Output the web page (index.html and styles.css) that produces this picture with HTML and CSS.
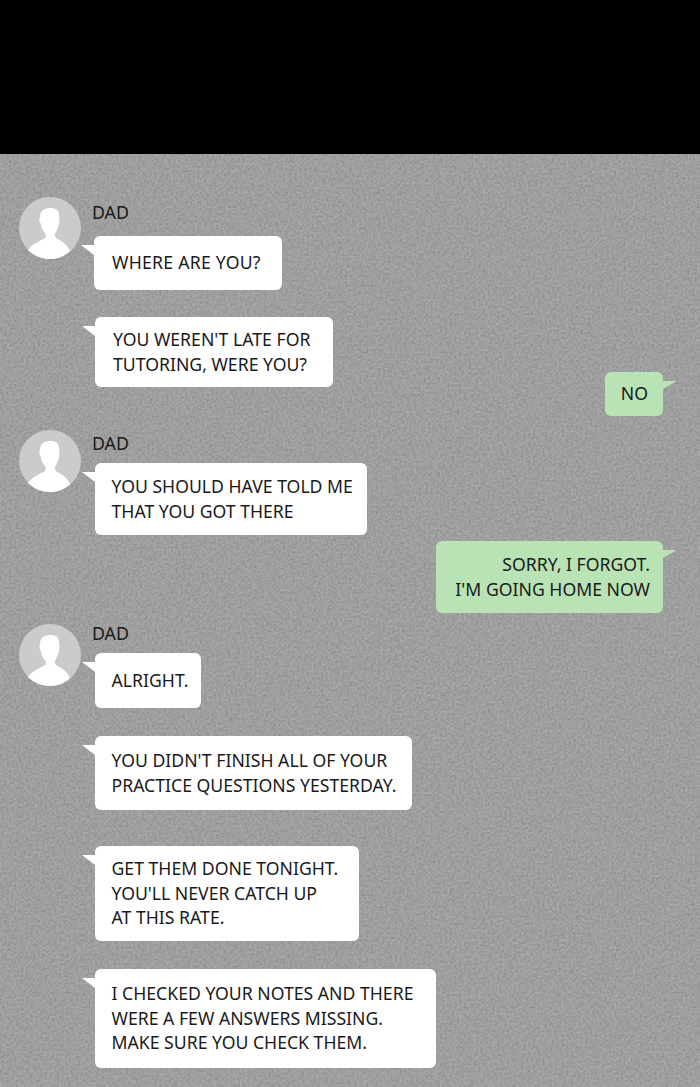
FILE: index.html
```html
<!DOCTYPE html>
<html lang="en">
<head>
    <meta charset="UTF-8">
    <meta name="viewport" content="width=device-width, initial-scale=1.0">
    <title>Chat with Dad</title>
    <link rel="stylesheet" href="styles.css">
</head>
<body>
    <div class="top-panel"></div>

    <main class="chat">
        <!-- paper grain behind the messages -->
        <svg class="grain" width="700" height="933" aria-hidden="true">
            <filter id="grainFilter" x="0" y="0" width="100%" height="100%">
                <feTurbulence type="fractalNoise" baseFrequency="0.42" numOctaves="2" seed="4"/>
                <feColorMatrix type="matrix" values="0 0 0 0 0  0 0 0 0 0  0 0 0 0 0  1.8 0 0 0 -0.6"/>
            </filter>
            <rect width="700" height="933" filter="url(#grainFilter)"/>
        </svg>

        <section class="group first-group">
            <svg class="avatar" viewBox="0 0 62 62" aria-hidden="true">
                <circle cx="31" cy="31" r="31" fill="#cbcbcb"/>
                <path class="person" d="M9 53 C13 47 21 44 26 41 C27 39 27 37 26 36 C23 33 22 30 22 27 C20 25 20 22 21 20 C21 14 24 12 30 11 C36 11 40 12 40 18 C41 24 40 30 37 35 C35 37 36 39 37 41 C42 44 48 47 51 54 C46 59 39 62 31 62 C22 62 14 58 9 53 Z"/>
            </svg>
            <div class="messages">
                <div class="name name-a">DAD</div>
                <div class="bubble m1">WHERE ARE YOU?</div>
                <div class="bubble m2">YOU WEREN'T LATE FOR<br>TUTORING, WERE YOU?</div>
            </div>
        </section>

        <div class="bubble mine m3">NO</div>

        <section class="group second-group">
            <svg class="avatar" viewBox="0 0 62 62" aria-hidden="true">
                <circle cx="31" cy="31" r="31" fill="#cbcbcb"/>
                <path class="person" d="M9 53 C13 47 21 44 26 41 C27 39 27 37 26 36 C23 33 22 30 22 27 C20 25 20 22 21 20 C21 14 24 12 30 11 C36 11 40 12 40 18 C41 24 40 30 37 35 C35 37 36 39 37 41 C42 44 48 47 51 54 C46 59 39 62 31 62 C22 62 14 58 9 53 Z"/>
            </svg>
            <div class="messages">
                <div class="name name-b">DAD</div>
                <div class="bubble m4">YOU SHOULD HAVE TOLD ME<br>THAT YOU GOT THERE</div>
            </div>
        </section>

        <div class="bubble mine m5">SORRY, I FORGOT.<br>I'M GOING HOME NOW</div>

        <section class="group third-group">
            <svg class="avatar" viewBox="0 0 62 62" aria-hidden="true">
                <circle cx="31" cy="31" r="31" fill="#cbcbcb"/>
                <path class="person" d="M9 53 C13 47 21 44 26 41 C27 39 27 37 26 36 C23 33 22 30 22 27 C20 25 20 22 21 20 C21 14 24 12 30 11 C36 11 40 12 40 18 C41 24 40 30 37 35 C35 37 36 39 37 41 C42 44 48 47 51 54 C46 59 39 62 31 62 C22 62 14 58 9 53 Z"/>
            </svg>
            <div class="messages">
                <div class="name name-c">DAD</div>
                <div class="bubble m6">ALRIGHT.</div>
                <div class="bubble m7">YOU DIDN'T FINISH ALL OF YOUR<br>PRACTICE QUESTIONS YESTERDAY.</div>
                <div class="bubble m8">GET THEM DONE TONIGHT.<br>YOU'LL NEVER CATCH UP<br>AT THIS RATE.</div>
                <div class="bubble m9">I CHECKED YOUR NOTES AND THERE<br>WERE A FEW ANSWERS MISSING.<br>MAKE SURE YOU CHECK THEM.</div>
            </div>
        </section>
    </main>
</body>
</html>
```

FILE: styles.css
```css
* {
    margin: 0;
    padding: 0;
    box-sizing: border-box;
}

body {
    font-family: "Noto Sans", "Open Sans", sans-serif;
    color: #1a1a1a;
    background-color: #a7a7a7;
    overflow: hidden;
}

.top-panel {
    height: 154px;
    background-color: #000;
}

.chat {
    position: relative;
    height: 933px;
    padding-top: 43px;
    display: flex;
    flex-direction: column;
    overflow: hidden;
}

.grain {
    position: absolute;
    top: 0;
    left: 0;
    opacity: 0.16;
}

.group {
    position: relative;
    display: flex;
    align-items: flex-start;
    padding-left: 19px;
}

.avatar {
    width: 62px;
    height: 62px;
    flex: none;
}

.person {
    fill: #fff;
}

.messages {
    display: flex;
    flex-direction: column;
    align-items: flex-start;
    padding-left: 14px;
}

.name {
    font-size: 17.8px;
    line-height: 22px;
    margin-left: -3px;
}

.name-a {
    margin-top: 4px;
}

.name-b {
    margin-top: 2px;
}

.name-c {
    margin-top: -2px;
}

.bubble {
    position: relative;
    display: flex;
    align-items: center;
    font-size: 17.65px;
    line-height: 24.5px;
    background-color: #fff;
    border-radius: 6px;
    padding-left: 16.5px;
    padding-bottom: 1px;
    white-space: nowrap;
}

/* speech tail */
.bubble::before {
    content: "";
    position: absolute;
    top: 9px;
    left: -13px;
    width: 13px;
    height: 10px;
    background-color: inherit;
    clip-path: polygon(0 0, 100% 0, 100% 100%);
}

.mine {
    align-self: flex-end;
    justify-content: flex-end;
    text-align: right;
    margin-right: 37px;
    padding-left: 0;
    padding-right: 13px;
    background-color: #b9e3b5;
}

.mine::before {
    left: auto;
    right: -14px;
    width: 14px;
    height: 8px;
    clip-path: polygon(0 0, 100% 0, 0 100%);
}

/* each bubble sized by hand to the drawn strip */
.m1 { width: 188px; height: 54px; margin-top: 13px; margin-left: -1px; padding-left: 18px; letter-spacing: 0.25px; }
.m2 { width: 238px; height: 70px; margin-top: 27px; padding-left: 18px; }
.m3 { width: 58px; height: 44px; margin-top: -15px; padding-right: 15px; }
.m4 { width: 272px; height: 72px; margin-top: 9px; }
.m5 { width: 227px; height: 72px; margin-top: 6px; }
.m6 { width: 106px; height: 55px; margin-top: 9px; }
.m7 { width: 317px; height: 74px; margin-top: 28px; }
.m8 { width: 264px; height: 95px; margin-top: 36px; }
.m9 { width: 341px; height: 99px; margin-top: 28px; }

.second-group {
    margin-top: 14px;
}

.third-group {
    margin-top: 11px;
}
```
